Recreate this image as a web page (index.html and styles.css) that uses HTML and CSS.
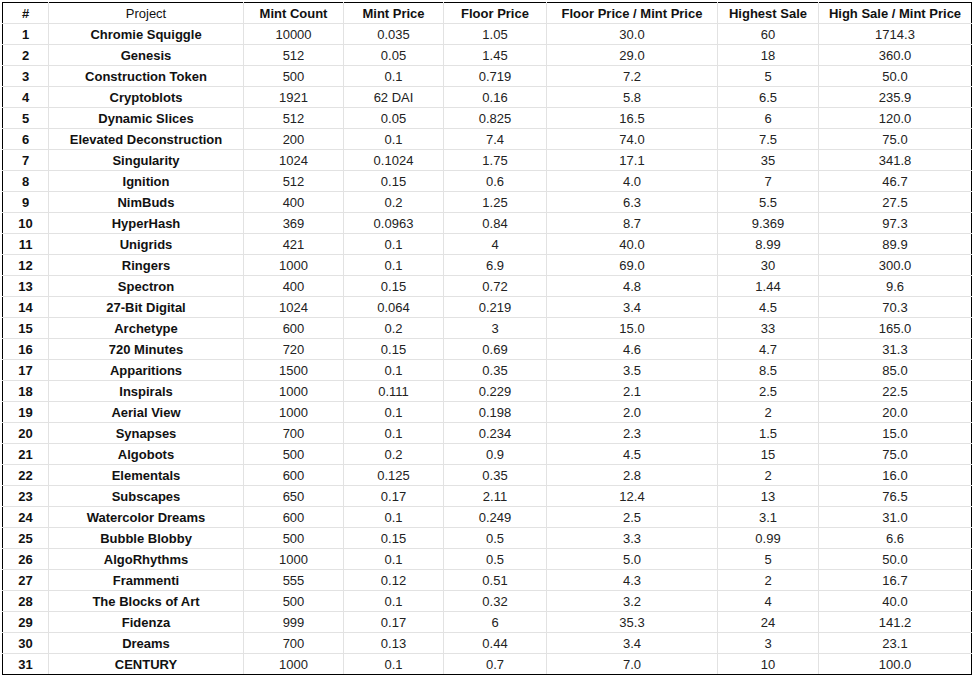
FILE: index.html
```html
<!DOCTYPE html>
<html>
<head>
<meta charset="utf-8">
<link rel="stylesheet" href="styles.css">
</head>
<body>
<div class="sheet">
<table class="grid">
<colgroup>
<col class="c-num"><col class="c-proj"><col class="c-count"><col class="c-mint"><col class="c-floor"><col class="c-ratio"><col class="c-high"><col class="c-hratio">
</colgroup>
<thead>
<tr><th>#</th><th class="plain">Project</th><th>Mint Count</th><th>Mint Price</th><th>Floor Price</th><th>Floor Price / Mint Price</th><th>Highest Sale</th><th>High Sale / Mint Price</th></tr>
</thead>
<tbody>
<tr><th>1</th><th>Chromie Squiggle</th><td>10000</td><td>0.035</td><td>1.05</td><td>30.0</td><td>60</td><td>1714.3</td></tr>
<tr><th>2</th><th>Genesis</th><td>512</td><td>0.05</td><td>1.45</td><td>29.0</td><td>18</td><td>360.0</td></tr>
<tr><th>3</th><th>Construction Token</th><td>500</td><td>0.1</td><td>0.719</td><td>7.2</td><td>5</td><td>50.0</td></tr>
<tr><th>4</th><th>Cryptoblots</th><td>1921</td><td>62 DAI</td><td>0.16</td><td>5.8</td><td>6.5</td><td>235.9</td></tr>
<tr><th>5</th><th>Dynamic Slices</th><td>512</td><td>0.05</td><td>0.825</td><td>16.5</td><td>6</td><td>120.0</td></tr>
<tr><th>6</th><th>Elevated Deconstruction</th><td>200</td><td>0.1</td><td>7.4</td><td>74.0</td><td>7.5</td><td>75.0</td></tr>
<tr><th>7</th><th>Singularity</th><td>1024</td><td>0.1024</td><td>1.75</td><td>17.1</td><td>35</td><td>341.8</td></tr>
<tr><th>8</th><th>Ignition</th><td>512</td><td>0.15</td><td>0.6</td><td>4.0</td><td>7</td><td>46.7</td></tr>
<tr><th>9</th><th>NimBuds</th><td>400</td><td>0.2</td><td>1.25</td><td>6.3</td><td>5.5</td><td>27.5</td></tr>
<tr><th>10</th><th>HyperHash</th><td>369</td><td>0.0963</td><td>0.84</td><td>8.7</td><td>9.369</td><td>97.3</td></tr>
<tr><th>11</th><th>Unigrids</th><td>421</td><td>0.1</td><td>4</td><td>40.0</td><td>8.99</td><td>89.9</td></tr>
<tr><th>12</th><th>Ringers</th><td>1000</td><td>0.1</td><td>6.9</td><td>69.0</td><td>30</td><td>300.0</td></tr>
<tr><th>13</th><th>Spectron</th><td>400</td><td>0.15</td><td>0.72</td><td>4.8</td><td>1.44</td><td>9.6</td></tr>
<tr><th>14</th><th>27-Bit Digital</th><td>1024</td><td>0.064</td><td>0.219</td><td>3.4</td><td>4.5</td><td>70.3</td></tr>
<tr><th>15</th><th>Archetype</th><td>600</td><td>0.2</td><td>3</td><td>15.0</td><td>33</td><td>165.0</td></tr>
<tr><th>16</th><th>720 Minutes</th><td>720</td><td>0.15</td><td>0.69</td><td>4.6</td><td>4.7</td><td>31.3</td></tr>
<tr><th>17</th><th>Apparitions</th><td>1500</td><td>0.1</td><td>0.35</td><td>3.5</td><td>8.5</td><td>85.0</td></tr>
<tr><th>18</th><th>Inspirals</th><td>1000</td><td>0.111</td><td>0.229</td><td>2.1</td><td>2.5</td><td>22.5</td></tr>
<tr><th>19</th><th>Aerial View</th><td>1000</td><td>0.1</td><td>0.198</td><td>2.0</td><td>2</td><td>20.0</td></tr>
<tr><th>20</th><th>Synapses</th><td>700</td><td>0.1</td><td>0.234</td><td>2.3</td><td>1.5</td><td>15.0</td></tr>
<tr><th>21</th><th>Algobots</th><td>500</td><td>0.2</td><td>0.9</td><td>4.5</td><td>15</td><td>75.0</td></tr>
<tr><th>22</th><th>Elementals</th><td>600</td><td>0.125</td><td>0.35</td><td>2.8</td><td>2</td><td>16.0</td></tr>
<tr><th>23</th><th>Subscapes</th><td>650</td><td>0.17</td><td>2.11</td><td>12.4</td><td>13</td><td>76.5</td></tr>
<tr><th>24</th><th>Watercolor Dreams</th><td>600</td><td>0.1</td><td>0.249</td><td>2.5</td><td>3.1</td><td>31.0</td></tr>
<tr><th>25</th><th>Bubble Blobby</th><td>500</td><td>0.15</td><td>0.5</td><td>3.3</td><td>0.99</td><td>6.6</td></tr>
<tr><th>26</th><th>AlgoRhythms</th><td>1000</td><td>0.1</td><td>0.5</td><td>5.0</td><td>5</td><td>50.0</td></tr>
<tr><th>27</th><th>Frammenti</th><td>555</td><td>0.12</td><td>0.51</td><td>4.3</td><td>2</td><td>16.7</td></tr>
<tr><th>28</th><th>The Blocks of Art</th><td>500</td><td>0.1</td><td>0.32</td><td>3.2</td><td>4</td><td>40.0</td></tr>
<tr><th>29</th><th>Fidenza</th><td>999</td><td>0.17</td><td>6</td><td>35.3</td><td>24</td><td>141.2</td></tr>
<tr><th>30</th><th>Dreams</th><td>700</td><td>0.13</td><td>0.44</td><td>3.4</td><td>3</td><td>23.1</td></tr>
<tr><th>31</th><th>CENTURY</th><td>1000</td><td>0.1</td><td>0.7</td><td>7.0</td><td>10</td><td>100.0</td></tr>
</tbody>
</table>
</div>
</body>
</html>
```
FILE: styles.css
```css
html, body {
  margin: 0;
  padding: 0;
  background: #fff;
}
.sheet {
  padding: 2px 0 0 2px;
}
.grid {
  border-collapse: collapse;
  table-layout: fixed;
  width: 970px;
  border: 1px solid #000;
  font-family: "Liberation Sans", Arial, sans-serif;
  font-size: 13px;
  color: #222;
}
.c-num { width: 46px; }
.c-proj { width: 195px; }
.c-count { width: 100px; }
.c-mint { width: 100px; }
.c-floor { width: 103px; }
.c-ratio { width: 171px; }
.c-high { width: 101px; }
.c-hratio { width: 153px; }
.grid th, .grid td {
  border: 1px solid #e2e2e2;
  padding: 1px 2px 0;
  height: 19px;
  line-height: 16px;
  text-align: center;
  vertical-align: middle;
  white-space: nowrap;
  overflow: hidden;
}
.grid th { font-weight: bold; color: #111; }
.grid td { font-weight: normal; color: #222; }
.grid th.plain { font-weight: normal; }
.grid tr > :first-child { border-left-color: #000; }
.grid tr > :last-child { border-right-color: #000; }
.grid thead tr > * { border-top-color: #000; }
.grid tbody tr:last-child > * { border-bottom-color: #000; }
```
